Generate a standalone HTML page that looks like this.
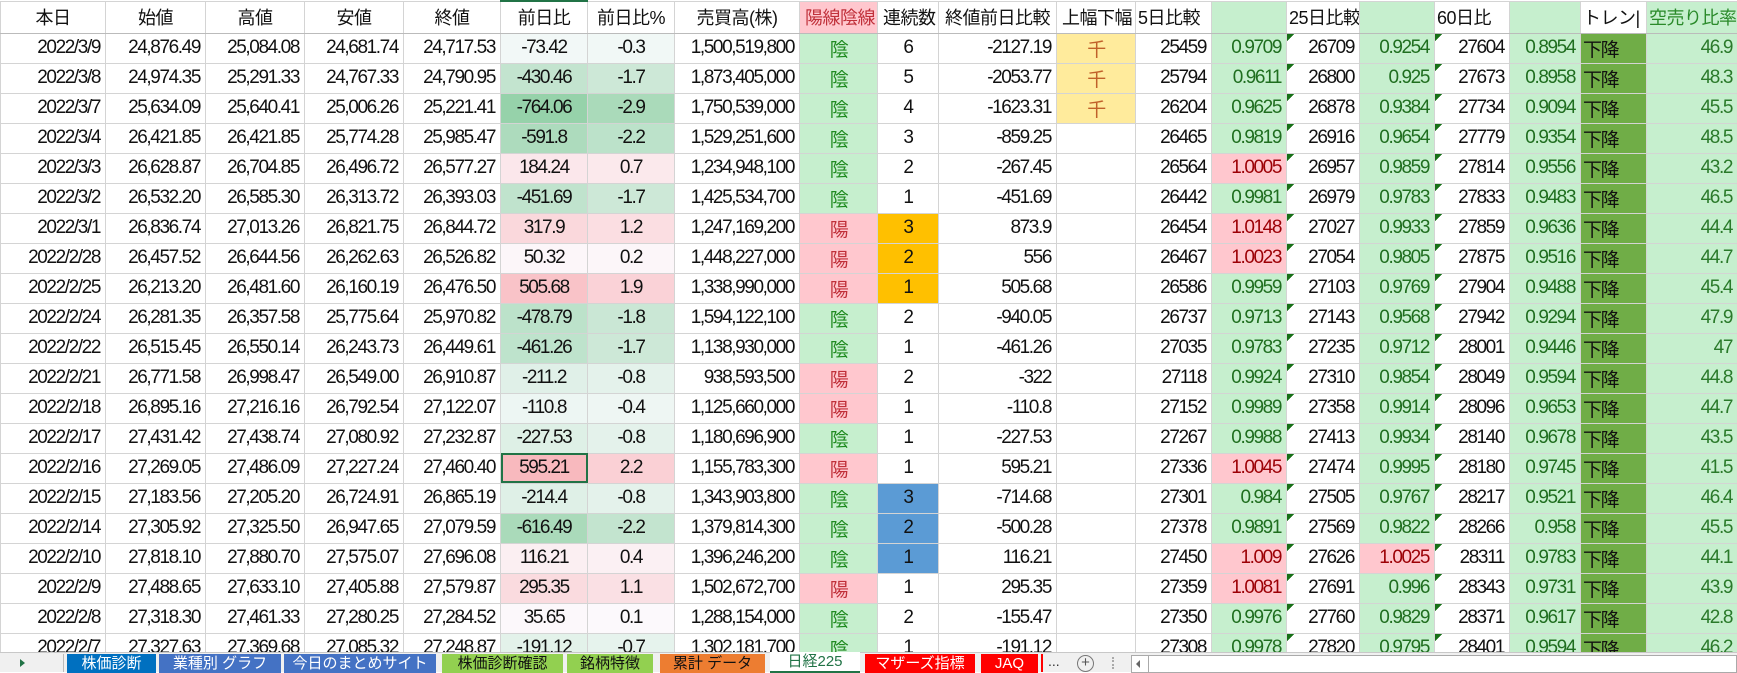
<!DOCTYPE html>
<html><head><meta charset="utf-8"><style>
*{margin:0;padding:0;box-sizing:border-box}
body{width:1737px;height:672px;overflow:hidden;background:#fff;font-family:"Liberation Sans","Noto Sans CJK JP",sans-serif;color:#111}
#wrap{position:absolute;left:0;top:0;width:1737px;height:653px;overflow:hidden}
table{border-collapse:collapse;table-layout:fixed;width:1737px}
td{height:30px;border:1px solid #d4d4d4;font-size:19px;letter-spacing:-1.4px;text-align:right;padding:0 5px;white-space:nowrap;overflow:hidden}
tr.h td{height:32px;text-align:center;font-size:18px;letter-spacing:-0.5px;border-bottom:1px solid #bbb}
tr.h td.l{text-align:left;padding-left:2px}
td.c{text-align:center}
td.s{text-align:left;padding-left:2px;background:#70ad47}
td.y{background:#c6efce;color:#1f6e1f}
td.r{background:#ffc7ce;color:#9c0006}
td.i1{background:#c6efce;color:#1f8a1f;text-align:center}
td.i2{background:#ffc7ce;color:#c0303a;text-align:center}
td.k{background:#ffeb9c;color:#c0602a;text-align:center}
td.o{background:#ffc000;text-align:center}
td.b{background:#5b9bd5;text-align:center}
td.t{background:linear-gradient(135deg,#177017 0,#177017 5px,transparent 5px) no-repeat,#fff}
td.tg{background:#c6efce;color:#2a7a2a}
#tabs{position:absolute;left:0;top:652px;width:1737px;height:20px;background:#f0f0f0;border-top:1px solid #c8c8c8}
.tab{position:absolute;top:1px;height:19px;color:#fff;font-size:15px;line-height:19px;text-align:center;white-space:nowrap}
</style></head><body>
<div id="wrap"><table>
<colgroup><col style="width:105px"><col style="width:100px"><col style="width:99px"><col style="width:99px"><col style="width:97px"><col style="width:87px"><col style="width:87px"><col style="width:125px"><col style="width:78px"><col style="width:61px"><col style="width:118px"><col style="width:79px"><col style="width:76px"><col style="width:75px"><col style="width:73px"><col style="width:75px"><col style="width:75px"><col style="width:71px"><col style="width:66px"><col style="width:91px"></colgroup>
<tr class="h"><td>本日</td><td>始値</td><td>高値</td><td>安値</td><td>終値</td><td style="border-top:2px solid #217346">前日比</td><td>前日比%</td><td>売買高(株)</td><td style="background:#ffc7ce;color:#c0303a">陽線陰線</td><td>連続数</td><td>終値前日比較</td><td>上幅下幅</td><td class="l">5日比較</td><td style="background:#c6efce"></td><td class="l">25日比較</td><td style="background:#c6efce"></td><td class="l">60日比</td><td style="background:#c6efce"></td><td class="l">トレン|</td><td class="l" style="background:#c6efce;color:#2a8a2a">空売り比率</td></tr>
<tr><td>2022/3/9</td><td>24,876.49</td><td>25,084.08</td><td>24,681.74</td><td>24,717.53</td><td class="c" style="background:rgb(242,248,247)">-73.42</td><td class="c" style="background:rgb(241,248,246)">-0.3</td><td>1,500,519,800</td><td class="i1">陰</td><td class="c">6</td><td>-2127.19</td><td class="k">千</td><td>25459</td><td class="y">0.9709</td><td class="t">26709</td><td class="y">0.9254</td><td class="t">27604</td><td class="y">0.8954</td><td class="s">下降</td><td class="tg">46.9</td></tr>
<tr><td>2022/3/8</td><td>24,974.35</td><td>25,291.33</td><td>24,767.33</td><td>24,790.95</td><td class="c" style="background:rgb(195,228,207)">-430.46</td><td class="c" style="background:rgb(205,232,215)">-1.7</td><td>1,873,405,000</td><td class="i1">陰</td><td class="c">5</td><td>-2053.77</td><td class="k">千</td><td>25794</td><td class="y">0.9611</td><td class="t">26800</td><td class="y">0.925</td><td class="t">27673</td><td class="y">0.8958</td><td class="s">下降</td><td class="tg">48.3</td></tr>
<tr><td>2022/3/7</td><td>25,634.09</td><td>25,640.41</td><td>25,006.26</td><td>25,221.41</td><td class="c" style="background:rgb(150,210,170)">-764.06</td><td class="c" style="background:rgb(170,218,186)">-2.9</td><td>1,750,539,000</td><td class="i1">陰</td><td class="c">4</td><td>-1623.31</td><td class="k">千</td><td>26204</td><td class="y">0.9625</td><td class="t">26878</td><td class="y">0.9384</td><td class="t">27734</td><td class="y">0.9094</td><td class="s">下降</td><td class="tg">45.5</td></tr>
<tr><td>2022/3/4</td><td>26,421.85</td><td>26,421.85</td><td>25,774.28</td><td>25,985.47</td><td class="c" style="background:rgb(173,219,189)">-591.8</td><td class="c" style="background:rgb(188,226,202)">-2.2</td><td>1,529,251,600</td><td class="i1">陰</td><td class="c">3</td><td>-859.25</td><td></td><td>26465</td><td class="y">0.9819</td><td class="t">26916</td><td class="y">0.9654</td><td class="t">27779</td><td class="y">0.9354</td><td class="s">下降</td><td class="tg">48.5</td></tr>
<tr><td>2022/3/3</td><td>26,628.87</td><td>26,704.85</td><td>26,496.72</td><td>26,577.27</td><td class="c" style="background:rgb(251,231,235)">184.24</td><td class="c" style="background:rgb(251,233,236)">0.7</td><td>1,234,948,100</td><td class="i1">陰</td><td class="c">2</td><td>-267.45</td><td></td><td>26564</td><td class="r">1.0005</td><td class="t">26957</td><td class="y">0.9859</td><td class="t">27814</td><td class="y">0.9556</td><td class="s">下降</td><td class="tg">43.2</td></tr>
<tr><td>2022/3/2</td><td>26,532.20</td><td>26,585.30</td><td>26,313.72</td><td>26,393.03</td><td class="c" style="background:rgb(192,227,205)">-451.69</td><td class="c" style="background:rgb(205,232,215)">-1.7</td><td>1,425,534,700</td><td class="i1">陰</td><td class="c">1</td><td>-451.69</td><td></td><td>26442</td><td class="y">0.9981</td><td class="t">26979</td><td class="y">0.9783</td><td class="t">27833</td><td class="y">0.9483</td><td class="s">下降</td><td class="tg">46.5</td></tr>
<tr><td>2022/3/1</td><td>26,836.74</td><td>27,013.26</td><td>26,821.75</td><td>26,844.72</td><td class="c" style="background:rgb(250,216,220)">317.9</td><td class="c" style="background:rgb(251,222,226)">1.2</td><td>1,247,169,200</td><td class="i2">陽</td><td class="o">3</td><td>873.9</td><td></td><td>26454</td><td class="r">1.0148</td><td class="t">27027</td><td class="y">0.9933</td><td class="t">27859</td><td class="y">0.9636</td><td class="s">下降</td><td class="tg">44.4</td></tr>
<tr><td>2022/2/28</td><td>26,457.52</td><td>26,644.56</td><td>26,262.63</td><td>26,526.82</td><td class="c" style="background:rgb(252,246,249)">50.32</td><td class="c" style="background:rgb(252,246,249)">0.2</td><td>1,448,227,000</td><td class="i2">陽</td><td class="o">2</td><td>556</td><td></td><td>26467</td><td class="r">1.0023</td><td class="t">27054</td><td class="y">0.9805</td><td class="t">27875</td><td class="y">0.9516</td><td class="s">下降</td><td class="tg">44.7</td></tr>
<tr><td>2022/2/25</td><td>26,213.20</td><td>26,481.60</td><td>26,160.19</td><td>26,476.50</td><td class="c" style="background:rgb(249,195,200)">505.68</td><td class="c" style="background:rgb(250,210,215)">1.9</td><td>1,338,990,000</td><td class="i2">陽</td><td class="o">1</td><td>505.68</td><td></td><td>26586</td><td class="y">0.9959</td><td class="t">27103</td><td class="y">0.9769</td><td class="t">27904</td><td class="y">0.9488</td><td class="s">下降</td><td class="tg">45.4</td></tr>
<tr><td>2022/2/24</td><td>26,281.35</td><td>26,357.58</td><td>25,775.64</td><td>25,970.82</td><td class="c" style="background:rgb(188,226,202)">-478.79</td><td class="c" style="background:rgb(202,231,213)">-1.8</td><td>1,594,122,100</td><td class="i1">陰</td><td class="c">2</td><td>-940.05</td><td></td><td>26737</td><td class="y">0.9713</td><td class="t">27143</td><td class="y">0.9568</td><td class="t">27942</td><td class="y">0.9294</td><td class="s">下降</td><td class="tg">47.9</td></tr>
<tr><td>2022/2/22</td><td>26,515.45</td><td>26,550.14</td><td>26,243.73</td><td>26,449.61</td><td class="c" style="background:rgb(190,227,204)">-461.26</td><td class="c" style="background:rgb(205,232,215)">-1.7</td><td>1,138,930,000</td><td class="i1">陰</td><td class="c">1</td><td>-461.26</td><td></td><td>27035</td><td class="y">0.9783</td><td class="t">27235</td><td class="y">0.9712</td><td class="t">28001</td><td class="y">0.9446</td><td class="s">下降</td><td class="tg">47</td></tr>
<tr><td>2022/2/21</td><td>26,771.58</td><td>26,998.47</td><td>26,549.00</td><td>26,910.87</td><td class="c" style="background:rgb(224,240,232)">-211.2</td><td class="c" style="background:rgb(228,242,235)">-0.8</td><td>938,593,500</td><td class="i2">陽</td><td class="c">2</td><td>-322</td><td></td><td>27118</td><td class="y">0.9924</td><td class="t">27310</td><td class="y">0.9854</td><td class="t">28049</td><td class="y">0.9594</td><td class="s">下降</td><td class="tg">44.8</td></tr>
<tr><td>2022/2/18</td><td>26,895.16</td><td>27,216.16</td><td>26,792.54</td><td>27,122.07</td><td class="c" style="background:rgb(237,246,243)">-110.8</td><td class="c" style="background:rgb(238,246,243)">-0.4</td><td>1,125,660,000</td><td class="i2">陽</td><td class="c">1</td><td>-110.8</td><td></td><td>27152</td><td class="y">0.9989</td><td class="t">27358</td><td class="y">0.9914</td><td class="t">28096</td><td class="y">0.9653</td><td class="s">下降</td><td class="tg">44.7</td></tr>
<tr><td>2022/2/17</td><td>27,431.42</td><td>27,438.74</td><td>27,080.92</td><td>27,232.87</td><td class="c" style="background:rgb(222,240,230)">-227.53</td><td class="c" style="background:rgb(228,242,235)">-0.8</td><td>1,180,696,900</td><td class="i1">陰</td><td class="c">1</td><td>-227.53</td><td></td><td>27267</td><td class="y">0.9988</td><td class="t">27413</td><td class="y">0.9934</td><td class="t">28140</td><td class="y">0.9678</td><td class="s">下降</td><td class="tg">43.5</td></tr>
<tr><td>2022/2/16</td><td>27,269.05</td><td>27,486.09</td><td>27,227.24</td><td>27,460.40</td><td class="c" style="background:rgb(248,185,190);outline:2px solid #217346;outline-offset:-2px">595.21</td><td class="c" style="background:rgb(250,208,213)">2.2</td><td>1,155,783,300</td><td class="i2">陽</td><td class="c">1</td><td>595.21</td><td></td><td>27336</td><td class="r">1.0045</td><td class="t">27474</td><td class="y">0.9995</td><td class="t">28180</td><td class="y">0.9745</td><td class="s">下降</td><td class="tg">41.5</td></tr>
<tr><td>2022/2/15</td><td>27,183.56</td><td>27,205.20</td><td>26,724.91</td><td>26,865.19</td><td class="c" style="background:rgb(223,240,231)">-214.4</td><td class="c" style="background:rgb(228,242,235)">-0.8</td><td>1,343,903,800</td><td class="i1">陰</td><td class="b">3</td><td>-714.68</td><td></td><td>27301</td><td class="y">0.984</td><td class="t">27505</td><td class="y">0.9767</td><td class="t">28217</td><td class="y">0.9521</td><td class="s">下降</td><td class="tg">46.4</td></tr>
<tr><td>2022/2/14</td><td>27,305.92</td><td>27,325.50</td><td>26,947.65</td><td>27,079.59</td><td class="c" style="background:rgb(170,218,186)">-616.49</td><td class="c" style="background:rgb(195,228,207)">-2.2</td><td>1,379,814,300</td><td class="i1">陰</td><td class="b">2</td><td>-500.28</td><td></td><td>27378</td><td class="y">0.9891</td><td class="t">27569</td><td class="y">0.9822</td><td class="t">28266</td><td class="y">0.958</td><td class="s">下降</td><td class="tg">45.5</td></tr>
<tr><td>2022/2/10</td><td>27,818.10</td><td>27,880.70</td><td>27,575.07</td><td>27,696.08</td><td class="c" style="background:rgb(251,239,242)">116.21</td><td class="c" style="background:rgb(251,240,243)">0.4</td><td>1,396,246,200</td><td class="i1">陰</td><td class="b">1</td><td>116.21</td><td></td><td>27450</td><td class="r">1.009</td><td class="t">27626</td><td class="r">1.0025</td><td class="t">28311</td><td class="y">0.9783</td><td class="s">下降</td><td class="tg">44.1</td></tr>
<tr><td>2022/2/9</td><td>27,488.65</td><td>27,633.10</td><td>27,405.88</td><td>27,579.87</td><td class="c" style="background:rgb(250,219,223)">295.35</td><td class="c" style="background:rgb(250,224,228)">1.1</td><td>1,502,672,700</td><td class="i2">陽</td><td class="c">1</td><td>295.35</td><td></td><td>27359</td><td class="r">1.0081</td><td class="t">27691</td><td class="y">0.996</td><td class="t">28343</td><td class="y">0.9731</td><td class="s">下降</td><td class="tg">43.9</td></tr>
<tr><td>2022/2/8</td><td>27,318.30</td><td>27,461.33</td><td>27,280.25</td><td>27,284.52</td><td class="c" style="background:rgb(252,248,251)">35.65</td><td class="c" style="background:rgb(252,249,252)">0.1</td><td>1,288,154,000</td><td class="i1">陰</td><td class="c">2</td><td>-155.47</td><td></td><td>27350</td><td class="y">0.9976</td><td class="t">27760</td><td class="y">0.9829</td><td class="t">28371</td><td class="y">0.9617</td><td class="s">下降</td><td class="tg">42.8</td></tr>
<tr><td>2022/2/7</td><td>27,327.63</td><td>27,369.68</td><td>27,085.32</td><td>27,248.87</td><td class="c" style="background:rgb(227,242,234)">-191.12</td><td class="c" style="background:rgb(230,243,237)">-0.7</td><td>1,302,181,700</td><td class="i1">陰</td><td class="c">1</td><td>-191.12</td><td></td><td>27308</td><td class="y">0.9978</td><td class="t">27820</td><td class="y">0.9795</td><td class="t">28401</td><td class="y">0.9594</td><td class="s">下降</td><td class="tg">46.2</td></tr>
</table></div>
<div id="tabs">
<div style="position:absolute;left:20px;top:6px;width:0;height:0;border-left:5px solid #217346;border-top:4px solid transparent;border-bottom:4px solid transparent"></div>
<div style="position:absolute;left:63px;top:1px;width:1px;height:18px;background:#bbb"></div>
<div class="tab" style="left:67px;width:89px;background:#0070c0">株価診断</div>
<div class="tab" style="left:159px;width:122px;background:#4472c4">業種別 グラフ</div>
<div class="tab" style="left:284px;width:152px;background:#4472c4">今日のまとめサイト</div>
<div class="tab" style="left:442px;width:121px;background:#92d050;color:#111">株価診断確認</div>
<div class="tab" style="left:567px;width:86px;background:#92d050;color:#111">銘柄特徴</div>
<div class="tab" style="left:660px;width:105px;background:#ed7d31;color:#111">累計 データ</div>
<div class="tab" style="left:770px;width:90px;top:-1px;height:21px;background:#fff;color:#217346;border-bottom:2px solid #217346">日経225</div>
<div class="tab" style="left:865px;width:110px;background:#ff0000">マザーズ指標</div>
<div class="tab" style="left:981px;width:57px;background:#ff0000">JAQ</div>
<div style="position:absolute;left:1041px;top:1px;width:2px;height:18px;background:#ff0000"></div>
<div style="position:absolute;left:1048px;top:0;font-size:14px;color:#333">...</div>
<div style="position:absolute;left:1077px;top:2px;width:17px;height:17px;border:1px solid #777;border-radius:50%;font-size:15px;line-height:14px;text-align:center;color:#555">+</div>
<div style="position:absolute;left:1112px;top:4px;width:2px;height:12px;border-left:2px dotted #aaa"></div>
<div style="position:absolute;left:1131px;top:2px;width:606px;height:18px;background:#fff;border:1px solid #aaa"></div>
<div style="position:absolute;left:1136px;top:7px;width:0;height:0;border-right:4px solid #666;border-top:4px solid transparent;border-bottom:4px solid transparent"></div>
<div style="position:absolute;left:1148px;top:2px;width:1px;height:18px;background:#aaa"></div>
</div>
</body></html>
